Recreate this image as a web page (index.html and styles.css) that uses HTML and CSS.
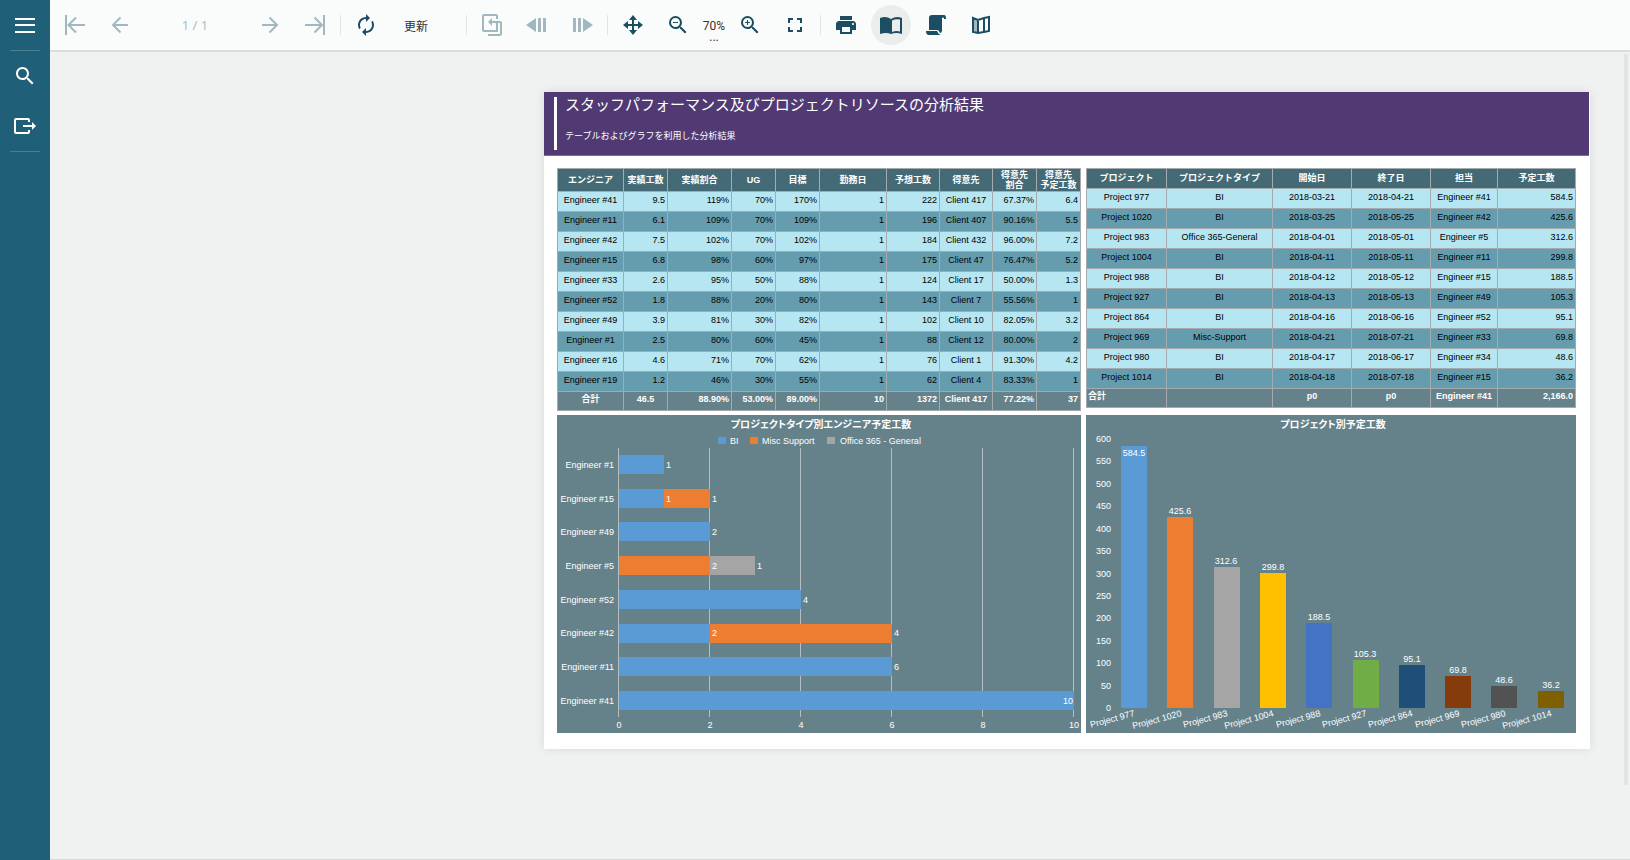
FILE: index.html
```html
<!DOCTYPE html>
<html lang="ja">
<head>
<meta charset="utf-8">
<title>レポートビューワ</title>
<link rel="stylesheet" href="styles.css">
</head>
<body>
<div class="viewer">
  <nav class="sidebar" aria-label="サイドバー">
    <button class="side-btn" type="button" aria-label="メニュー"><svg width="24" height="24" viewBox="0 0 24 24"><path d="M2 6h20M2 12h20M2 19h20" class="line"/></svg></button>
    <hr class="side-rule">
    <button class="side-btn" type="button" aria-label="検索"><svg width="24" height="24" viewBox="0 0 24 24"><path d="M15.500 14h-.79l-.28-.27C15.410 12.590 16 11.110 16 9.500 16 5.910 13.090 3 9.500 3S3 5.910 3 9.500 5.910 16 9.500 16c1.610 0 3.090-.59 4.230-1.570l.27.28v.79l5 4.990L20.490 19l-4.990-5zm-6 0C7.010 14 5 11.990 5 9.500S7.010 5 9.500 5 14 7.010 14 9.500 11.990 14 9.500 14z"/></svg></button>
    <button class="side-btn" type="button" aria-label="エクスポート"><svg width="24" height="24" viewBox="0 0 24 24"><path d="M16 8V6q0-1-1-1H3Q2 5 2 6v12q0 1 1 1h12q1 0 1-1v-2M10 12h10" class="line"/><path d="M19 8l4 4-4 4z"/></svg></button>
    <hr class="side-rule">
  </nav>
  <main class="main">
    <div class="toolbar" role="toolbar" aria-label="ツールバー">
      <button class="tool" type="button" disabled aria-label="最初のページ"><svg width="24" height="24" viewBox="0 0 24 24"><path d="M3 2v20M22 12H5M13 4.500L5.500 12l7.500 7.500" class="line"/></svg></button>
      <button class="tool" type="button" disabled aria-label="前のページ"><svg width="24" height="24" viewBox="0 0 24 24"><path d="M20 12H5M12.500 4.500L5 12l7.500 7.500" class="line"/></svg></button>
      <input class="page-no" type="text" value="1 / 1" aria-label="ページ番号" disabled>
      <button class="tool" type="button" disabled aria-label="次のページ"><svg width="24" height="24" viewBox="0 0 24 24"><path d="M4 12h15M11.500 4.500L19 12l-7.500 7.500" class="line"/></svg></button>
      <button class="tool" type="button" disabled aria-label="最後のページ"><svg width="24" height="24" viewBox="0 0 24 24"><path d="M21 2v20M2 12h17M11.500 4.500L19 12l-7.500 7.500" class="line"/></svg></button>
      <span class="sep"></span>
      <button class="tool refresh" type="button"><svg width="24" height="24" viewBox="0 0 24 24"><path d="M12 6v3l4-4-4-4v3c-4.420 0-8 3.580-8 8 0 1.570.46 3.030 1.240 4.260L6.700 14.800A5.870 5.870 0 0 1 6 12c0-3.310 2.690-6 6-6zm6.760 1.740L17.300 9.200c.44.84.7 1.790.7 2.800 0 3.310-2.690 6-6 6v-3l-4 4 4 4v-3c4.420 0 8-3.580 8-8 0-1.570-.46-3.030-1.240-4.260z"/></svg><span>更新</span></button>
      <span class="sep"></span>
      <button class="tool" type="button" disabled aria-label="親レポートに戻る"><svg width="24" height="24" viewBox="0 0 24 24"><path d="M17 6V3q0-1-1-1H4Q3 2 3 3v14q0 1 1 1h13V9h-6M18 9h2q1 0 1 1v11q0 1-1 1H8" class="line"/><path d="M12 5v8L8 9z"/></svg></button>
      <button class="tool" type="button" disabled aria-label="履歴を戻る"><svg width="24" height="24" viewBox="0 0 24 24"><path d="M1 12l10-7v14zM13 5h3v14h-3zM18 5h3v14h-3z"/></svg></button>
      <button class="tool" type="button" disabled aria-label="履歴を進む"><svg width="24" height="24" viewBox="0 0 24 24"><path d="M23 12L13 5v14zM8 5h3v14H8zM3 5h3v14H3z"/></svg></button>
      <span class="sep"></span>
      <button class="tool" type="button" aria-label="移動"><svg width="24" height="24" viewBox="0 0 24 24"><path d="M12 4v16M4 12h16" class="line"/><path d="M12 2l4 5H8zM12 22l4-5H8zM2 12l5-4v8zM22 12l-5-4v8z"/></svg></button>
      <button class="tool" type="button" aria-label="縮小"><svg width="24" height="24" viewBox="0 0 24 24"><path d="M15.500 14h-.79l-.28-.27A6.470 6.470 0 0 0 16 9.500 6.500 6.500 0 1 0 9.500 16c1.610 0 3.090-.59 4.230-1.570l.27.28v.79l5 4.990L20.490 19l-4.990-5zm-6 0C7.010 14 5 11.990 5 9.500S7.010 5 9.500 5 14 7.010 14 9.500 11.990 14 9.500 14zM7 9h5v1H7z"/></svg></button>
      <button class="zoom" type="button" aria-label="倍率 70%"><span>70%</span><span class="dots">...</span></button>
      <button class="tool" type="button" aria-label="拡大"><svg width="24" height="24" viewBox="0 0 24 24"><path d="M15.500 14h-.79l-.28-.27A6.470 6.470 0 0 0 16 9.500 6.500 6.500 0 1 0 9.500 16c1.610 0 3.090-.59 4.230-1.570l.27.28v.79l5 4.990L20.490 19l-4.990-5zm-6 0C7.010 14 5 11.990 5 9.500S7.010 5 9.500 5 14 7.010 14 9.500 11.990 14 9.500 14zM12 10h-2v2H9v-2H7V9h2V7h1v2h2v1z"/></svg></button>
      <button class="tool" type="button" aria-label="全画面"><svg width="24" height="24" viewBox="0 0 24 24"><path d="M7 14H5v5h5v-2H7v-3zm-2-4h2V7h3V5H5v5zm12 7h-3v2h5v-5h-2v3zM14 5v2h3v3h2V5h-5z"/></svg></button>
      <span class="sep"></span>
      <button class="tool" type="button" aria-label="印刷"><svg width="24" height="24" viewBox="0 0 24 24"><path d="M19 8H5c-1.660 0-3 1.340-3 3v6h4v4h12v-4h4v-6c0-1.660-1.340-3-3-3zm-3 11H8v-5h8v5zm3-7c-.55 0-1-.45-1-1s.45-1 1-1 1 .45 1 1-.45 1-1 1zm-1-9H6v4h12V3z"/></svg></button>
      <button class="tool active" type="button" aria-pressed="true" aria-label="単一ページ表示"><svg width="24" height="24" viewBox="0 0 24 24"><path d="M12 6Q7 2.500 1 5v16q6-2 11 0 5-2 11 0V5Q17 2.500 12 6zm9 12.500q-4-1-8 .5V7.500q4-2 8-1z"/></svg></button>
      <button class="tool" type="button" aria-label="連続ページ表示"><svg width="24" height="24" viewBox="0 0 24 24"><path d="M5 17V5q0-3 3-3h12q2 0 2 3v1h-2V5q-1-1-2 0v12q0 3-2 3-1-3-3-3zM2 18h11q1 3 4 4H5q-3 0-3-4z"/></svg></button>
      <button class="tool" type="button" aria-label="ギャラリー表示"><svg width="24" height="24" viewBox="0 0 24 24"><path d="M4 5l5 2v13l-5-2z" opacity=".4"/><path d="M4 5l5 2 6-2 5-1v14l-5 1-6 1-5-1zM9 7v13M15 5v14" class="line"/></svg></button>
    </div>
    <div class="canvas">
      <span class="scrollbar"></span>
      <article class="page">
        <header class="banner">
          <div class="banner-text">
            <h1>スタッフパフォーマンス及びプロジェクトリソースの分析結果</h1>
            <p>テーブルおよびグラフを利用した分析結果</p>
          </div>
        </header>
        <div class="report">
          <table class="grid engineers">
            <colgroup><col style="width:66px"><col style="width:44px"><col style="width:64px"><col style="width:44px"><col style="width:44px"><col style="width:67px"><col style="width:53px"><col style="width:53px"><col style="width:44px"><col></colgroup>
            <thead><tr><th>エンジニア</th><th>実績工数</th><th>実績割合</th><th>UG</th><th>目標</th><th>勤務日</th><th>予想工数</th><th>得意先</th><th>得意先<br>割合</th><th>得意先<br>予定工数</th></tr></thead>
            <tbody>
              <tr><td>Engineer #41</td><td>9.5</td><td>119%</td><td>70%</td><td>170%</td><td>1</td><td>222</td><td>Client 417</td><td>67.37%</td><td>6.4</td></tr>
              <tr><td>Engineer #11</td><td>6.1</td><td>109%</td><td>70%</td><td>109%</td><td>1</td><td>196</td><td>Client 407</td><td>90.16%</td><td>5.5</td></tr>
              <tr><td>Engineer #42</td><td>7.5</td><td>102%</td><td>70%</td><td>102%</td><td>1</td><td>184</td><td>Client 432</td><td>96.00%</td><td>7.2</td></tr>
              <tr><td>Engineer #15</td><td>6.8</td><td>98%</td><td>60%</td><td>97%</td><td>1</td><td>175</td><td>Client 47</td><td>76.47%</td><td>5.2</td></tr>
              <tr><td>Engineer #33</td><td>2.6</td><td>95%</td><td>50%</td><td>88%</td><td>1</td><td>124</td><td>Client 17</td><td>50.00%</td><td>1.3</td></tr>
              <tr><td>Engineer #52</td><td>1.8</td><td>88%</td><td>20%</td><td>80%</td><td>1</td><td>143</td><td>Client 7</td><td>55.56%</td><td>1</td></tr>
              <tr><td>Engineer #49</td><td>3.9</td><td>81%</td><td>30%</td><td>82%</td><td>1</td><td>102</td><td>Client 10</td><td>82.05%</td><td>3.2</td></tr>
              <tr><td>Engineer #1</td><td>2.5</td><td>80%</td><td>60%</td><td>45%</td><td>1</td><td>88</td><td>Client 12</td><td>80.00%</td><td>2</td></tr>
              <tr><td>Engineer #16</td><td>4.6</td><td>71%</td><td>70%</td><td>62%</td><td>1</td><td>76</td><td>Client 1</td><td>91.30%</td><td>4.2</td></tr>
              <tr><td>Engineer #19</td><td>1.2</td><td>46%</td><td>30%</td><td>55%</td><td>1</td><td>62</td><td>Client 4</td><td>83.33%</td><td>1</td></tr>
            </tbody>
            <tfoot><tr><td>合計</td><td class="mid">46.5</td><td>88.90%</td><td>53.00%</td><td>89.00%</td><td>10</td><td>1372</td><td>Client 417</td><td>77.22%</td><td>37</td></tr></tfoot>
          </table>
          <table class="grid projects">
            <colgroup><col style="width:80px"><col style="width:106px"><col style="width:79px"><col style="width:79px"><col style="width:67px"><col></colgroup>
            <thead><tr><th>プロジェクト</th><th>プロジェクトタイプ</th><th>開始日</th><th>終了日</th><th>担当</th><th>予定工数</th></tr></thead>
            <tbody>
              <tr><td>Project 977</td><td>BI</td><td>2018-03-21</td><td>2018-04-21</td><td>Engineer #41</td><td>584.5</td></tr>
              <tr><td>Project 1020</td><td>BI</td><td>2018-03-25</td><td>2018-05-25</td><td>Engineer #42</td><td>425.6</td></tr>
              <tr><td>Project 983</td><td>Office 365-General</td><td>2018-04-01</td><td>2018-05-01</td><td>Engineer #5</td><td>312.6</td></tr>
              <tr><td>Project 1004</td><td>BI</td><td>2018-04-11</td><td>2018-05-11</td><td>Engineer #11</td><td>299.8</td></tr>
              <tr><td>Project 988</td><td>BI</td><td>2018-04-12</td><td>2018-05-12</td><td>Engineer #15</td><td>188.5</td></tr>
              <tr><td>Project 927</td><td>BI</td><td>2018-04-13</td><td>2018-05-13</td><td>Engineer #49</td><td>105.3</td></tr>
              <tr><td>Project 864</td><td>BI</td><td>2018-04-16</td><td>2018-06-16</td><td>Engineer #52</td><td>95.1</td></tr>
              <tr><td>Project 969</td><td>Misc-Support</td><td>2018-04-21</td><td>2018-07-21</td><td>Engineer #33</td><td>69.8</td></tr>
              <tr><td>Project 980</td><td>BI</td><td>2018-04-17</td><td>2018-06-17</td><td>Engineer #34</td><td>48.6</td></tr>
              <tr><td>Project 1014</td><td>BI</td><td>2018-04-18</td><td>2018-07-18</td><td>Engineer #15</td><td>36.2</td></tr>
            </tbody>
            <tfoot><tr><td class="start">合計</td><td></td><td>p0</td><td>p0</td><td>Engineer #41</td><td>2,166.0</td></tr></tfoot>
          </table>
          <svg class="chart" viewBox="0 0 524 318" role="img" aria-label="プロジェクトタイプ別エンジニア予定工数">
            <text class="title" x="264" y="13">プロジェクトタイプ別エンジニア予定工数</text>
            <rect class="bi" x="161" y="22" width="8" height="7"/><text x="173" y="29">BI</text>
            <rect class="misc" x="193" y="22" width="8" height="7"/><text x="205" y="29">Misc Support</text>
            <rect class="office" x="270" y="22" width="8" height="7"/><text x="283" y="29">Office 365 - General</text>
            <path class="gridline" d="M61 33v269h1v-269zM152 33v269h1v-269zM243 33v269h1v-269zM334 33v269h1v-269zM425 33v269h1v-269zM516 33v269h1v-269z"/>
            <g class="bi">
              <rect x="62" y="40" width="45" height="19"/>
              <rect x="62" y="74" width="45" height="19"/>
              <rect x="62" y="107" width="91" height="19"/>
              <rect x="62" y="175" width="182" height="19"/>
              <rect x="62" y="209" width="91" height="19"/>
              <rect x="62" y="242" width="273" height="19"/>
              <rect x="62" y="276" width="455" height="19"/>
            </g>
            <g class="misc">
              <rect x="107" y="74" width="46" height="19"/>
              <rect x="62" y="141" width="91" height="19"/>
              <rect x="153" y="209" width="182" height="19"/>
            </g>
            <rect class="office" x="153" y="141" width="45" height="19"/>
            <g class="end">
              <text x="57" y="53">Engineer #1</text><text x="57" y="87">Engineer #15</text><text x="57" y="120">Engineer #49</text><text x="57" y="154">Engineer #5</text>
              <text x="57" y="188">Engineer #52</text><text x="57" y="221">Engineer #42</text><text x="57" y="255">Engineer #11</text><text x="57" y="289">Engineer #41</text>
              <text x="516" y="289">10</text>
            </g>
            <g>
              <text x="109" y="53">1</text><text x="109" y="87">1</text><text x="155" y="87">1</text><text x="155" y="120">2</text>
              <text x="155" y="154">2</text><text x="200" y="154">1</text><text x="246" y="188">4</text><text x="155" y="221">2</text>
              <text x="337" y="221">4</text><text x="337" y="255">6</text>
            </g>
            <g class="mid">
              <text x="62" y="313">0</text><text x="153" y="313">2</text><text x="244" y="313">4</text><text x="335" y="313">6</text><text x="426" y="313">8</text><text x="517" y="313">10</text>
            </g>
          </svg>
          <svg class="chart" viewBox="0 0 490 318" role="img" aria-label="プロジェクト別予定工数">
            <text class="title" x="247" y="13">プロジェクト別予定工数</text>
            <g class="end">
              <text x="25" y="27">600</text><text x="25" y="49">550</text><text x="25" y="72">500</text><text x="25" y="94">450</text><text x="25" y="117">400</text><text x="25" y="139">350</text><text x="25" y="162">300</text>
              <text x="25" y="184">250</text><text x="25" y="206">200</text><text x="25" y="229">150</text><text x="25" y="251">100</text><text x="25" y="274">50</text><text x="25" y="296">0</text>
            </g>
            <rect x="35" y="31" width="26" height="262" fill="#5b9bd5"/>
            <rect x="81" y="102" width="26" height="191" fill="#ed7d31"/>
            <rect x="128" y="152" width="26" height="141" fill="#a5a5a5"/>
            <rect x="174" y="158" width="26" height="135" fill="#ffc000"/>
            <rect x="220" y="208" width="26" height="85" fill="#4472c4"/>
            <rect x="267" y="245" width="26" height="48" fill="#70ad47"/>
            <rect x="313" y="250" width="26" height="43" fill="#1f4e79"/>
            <rect x="359" y="261" width="26" height="32" fill="#843c0c"/>
            <rect x="405" y="271" width="26" height="22" fill="#525252"/>
            <rect x="452" y="276" width="26" height="17" fill="#7f6000"/>
            <g class="mid">
              <text x="48" y="41">584.5</text><text x="94" y="99">425.6</text><text x="140" y="149">312.6</text><text x="187" y="155">299.8</text><text x="233" y="205">188.5</text>
              <text x="279" y="242">105.3</text><text x="326" y="247">95.1</text><text x="372" y="258">69.8</text><text x="418" y="268">48.6</text><text x="465" y="273">36.2</text>
            </g>
            <g class="end">
              <text transform="translate(49 301) rotate(-15)">Project 977</text>
              <text transform="translate(96 301) rotate(-15)">Project 1020</text>
              <text transform="translate(142 301) rotate(-15)">Project 983</text>
              <text transform="translate(188 301) rotate(-15)">Project 1004</text>
              <text transform="translate(235 301) rotate(-15)">Project 988</text>
              <text transform="translate(281 301) rotate(-15)">Project 927</text>
              <text transform="translate(327 301) rotate(-15)">Project 864</text>
              <text transform="translate(374 301) rotate(-15)">Project 969</text>
              <text transform="translate(420 301) rotate(-15)">Project 980</text>
              <text transform="translate(466 301) rotate(-15)">Project 1014</text>
            </g>
          </svg>
        </div>
      </article>
    </div>
  </main>
</div>
</body>
</html>
```

FILE: styles.css
```css
* { box-sizing: border-box; }

body {
  margin: 0;
  font-family: "Liberation Sans", "Noto Sans CJK JP", sans-serif;
}

button {
  padding: 0;
  border: 0;
  background: none;
  color: inherit;
  font: inherit;
}

svg { display: block; fill: currentColor; }
.line { fill: none; stroke: currentColor; stroke-width: 2; }

.viewer { display: flex; min-height: 100vh; }

.sidebar {
  display: flex;
  flex-direction: column;
  align-items: center;
  width: 50px;
  background: #205f78;
  color: #fff;
}
.side-btn {
  display: grid;
  place-items: center;
  width: 50px;
  height: 50px;
}
.side-rule {
  width: 30px;
  height: 1px;
  margin: 0;
  border: 0;
  background: #4d7f93;
}

.main {
  display: flex;
  flex: 1;
  flex-direction: column;
  min-width: 0;
  border-bottom: 1px solid #d9dada;
}

.toolbar {
  display: flex;
  align-items: center;
  gap: 5px;
  height: 52px;
  padding: 0 5px;
  border-bottom: 2px solid #dcdedd;
  background: #fafcfb;
  color: #1c4e63;
}
.tool {
  display: grid;
  place-items: center;
  width: 40px;
  height: 40px;
  border-radius: 20px;
}
.tool:disabled { color: #a2b8c0; }
.tool.active { background: #ebedec; }
.tool.refresh {
  display: flex;
  align-items: center;
  gap: 26px;
  width: 115px;
  padding-left: 8px;
  font-size: 12px;
}
.refresh span { color: #333; }
.sep { width: 1px; height: 20px; background: #e2e5e4; }
.page-no {
  width: 100px;
  padding: 0;
  border: 0;
  background: none;
  color: #a9c0c9;
  font: 13px "Noto Sans", sans-serif;
  text-align: center;
}
.zoom {
  display: flex;
  flex-direction: column;
  align-items: center;
  justify-content: flex-end;
  width: 22px;
  height: 40px;
  color: #333;
  font: 12px/16px Roboto, sans-serif;
}
.zoom .dots { height: 11px; line-height: 6px; }

.canvas {
  position: relative;
  display: grid;
  grid-template-columns: minmax(0, 494fr) minmax(0, 1046fr);
  flex: 1;
  align-items: start;
  padding: 40px 40px 40px 0;
  background: #f0f2f1;
}
.scrollbar {
  position: absolute;
  top: 2px;
  right: 2px;
  bottom: 74px;
  width: 4px;
  background: #e3e5e4;
}

.page {
  grid-column: 2;
  background: #fff;
  box-shadow: 0 0 10px rgba(0, 0, 0, 0.1);
}
.banner {
  padding: 5px 10px;
  border-bottom: 1px solid #8069a0;
  margin-right: 1px;
  background: #513a73;
  color: #fff;
}
.banner-text {
  height: 53px;
  padding-left: 8px;
  border-left: 3px solid #fff;
}
.banner h1 {
  margin: 0 0 16px;
  font-size: 15px;
  font-weight: 400;
  line-height: 16px;
}
.banner p { margin: 0; font-size: 9px; line-height: 14px; }

.report {
  display: grid;
  grid-template-columns: minmax(0, 524fr) minmax(0, 490fr);
  gap: 4px 5px;
  align-items: start;
  padding: 12px 14px 16px 13px;
}

.grid {
  width: 100%;
  table-layout: fixed;
  border-collapse: collapse;
  font-size: 9px;
  line-height: 10px;
  text-align: center;
}
.grid th, .grid td {
  height: 20px;
  padding: 0 2px 3px;
  border: 1px solid #a3abae;
  white-space: nowrap;
}
.grid th { padding: 0 0 1px; background: #446a75; color: #fff; }
.grid.engineers th { height: 23px; }
.grid tbody tr:nth-child(odd) { background: #b6e6f1; }
.grid tbody tr:nth-child(even) { background: #659daf; }
.grid tfoot { background: #65828b; color: #fff; font-weight: 700; }
.grid tfoot td { height: 19px; padding-bottom: 5px; }
.engineers td { text-align: right; }
.engineers td:first-child, .engineers td:nth-child(8), .engineers td.mid { text-align: center; }
.projects td:last-child { text-align: right; }
.projects td.start { text-align: left; padding-left: 1px; }

.chart {
  width: 100%;
  background: #65828b;
  fill: #fff;
  font-size: 9px;
}
.chart .title {
  font-size: 10px;
  font-weight: 700;
  font-feature-settings: "palt";
  text-anchor: middle;
}
.chart .mid { text-anchor: middle; }
.chart .end { text-anchor: end; }
.chart .gridline { fill: #b5bec2; }
.chart .bi { fill: #5b9bd5; }
.chart .misc { fill: #ed7d31; }
.chart .office { fill: #a5a5a5; }
```
